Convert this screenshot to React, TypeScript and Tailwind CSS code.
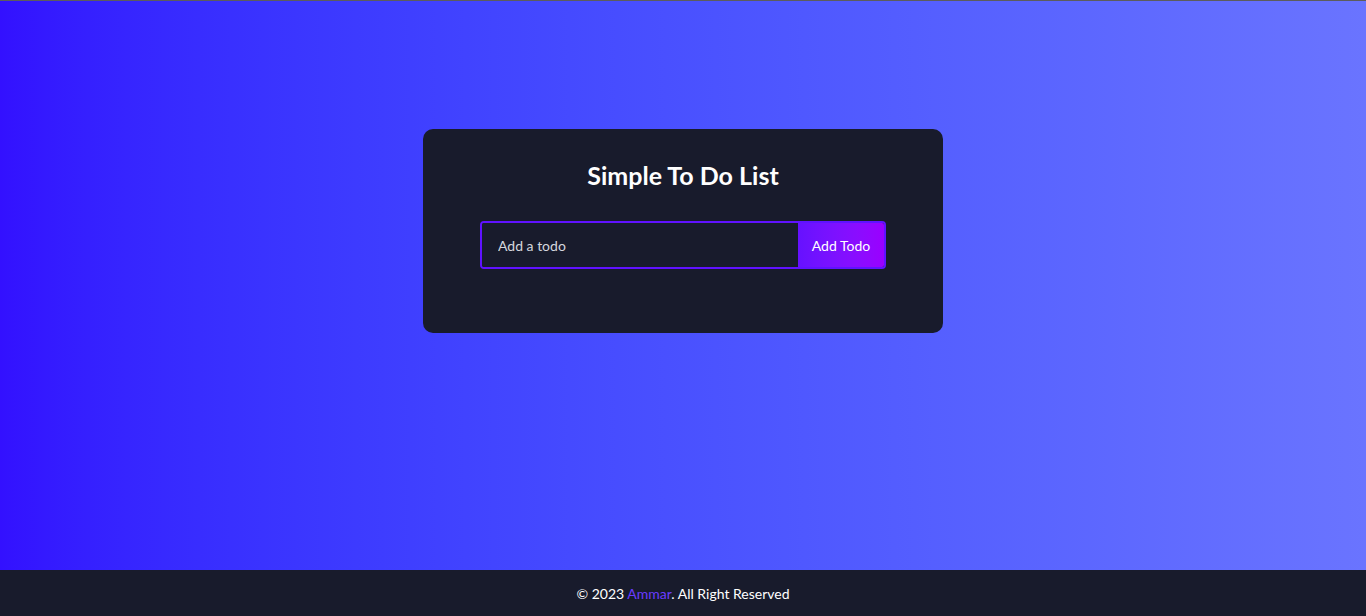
import React from "react";

export default function App() {
  return (
    <div
      className="flex h-[616px] flex-col overflow-hidden"
      style={{ fontFamily: 'Lato, "Noto Sans", sans-serif' }}
    >
      <main className="flex flex-1 flex-col items-center border-t border-[#5c5c5c] bg-linear-to-r from-[#3310ff] to-[#6a74ff] pt-[128px]">
        <div className="flex h-[204px] w-[520px] flex-col items-center rounded-[10px] bg-[#181b2c] pt-[30px]">
          <h1 className="text-[25px] leading-[32px] font-bold text-white">Simple To Do List</h1>
          <form
            className="mt-[30px] flex h-[48px] w-[406px] overflow-hidden rounded-[4px] border-2 border-[#6012ff]"
            onSubmit={(e) => e.preventDefault()}
          >
            <input
              type="text"
              placeholder="Add a todo"
              className="min-w-0 flex-1 bg-[#181b2c] px-[16px] text-[14px] text-white outline-none placeholder:text-[#d4d7de]"
            />
            <button
              type="submit"
              className="w-[86px] bg-linear-to-r from-[#6611ff] to-[#9a00ff] text-[14px] text-white"
            >
              Add Todo
            </button>
          </form>
        </div>
      </main>
      <footer className="flex h-[46px] items-center justify-center bg-[#181b2c] text-[14px] text-white">
        <p>
          © 2023 <span className="text-[#6b3cff]">Ammar</span>. All Right Reserved
        </p>
      </footer>
    </div>
  );
}
